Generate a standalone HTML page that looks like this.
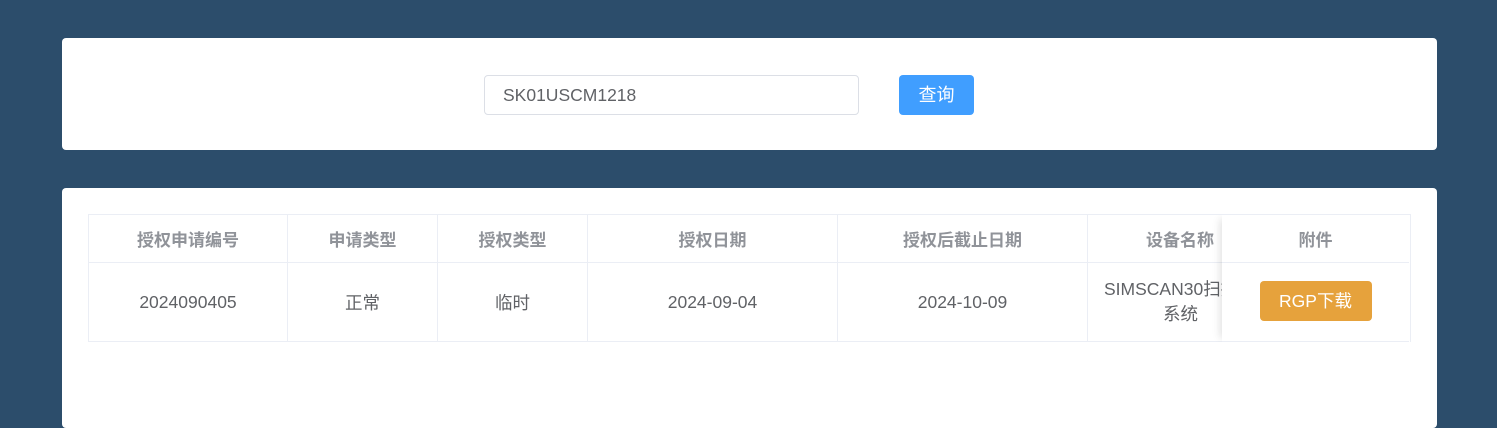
<!DOCTYPE html>
<html><head><meta charset="utf-8"><style>
body{margin:0;width:1497px;height:419px;background:#2c4d6b;font-family:"Liberation Sans","Noto Sans CJK SC",sans-serif;position:relative;overflow:hidden}
.card{position:absolute;left:62px;width:1375px;background:#fff;border-radius:4px}
.a{position:absolute}
.c{position:absolute;display:flex;align-items:center;justify-content:center;box-sizing:border-box;border-right:1px solid #ebeef5;border-bottom:1px solid #ebeef5;font-size:17.5px;color:#606266}
.h{font-weight:bold;color:#909399;font-size:17px}
</style></head><body>
<div class="card" style="top:38px;height:112px"></div>
<div class="a" style="left:484px;top:75px;width:375px;height:40px;box-sizing:border-box;border:1px solid #dcdfe6;border-radius:4px;font-size:17.5px;color:#606266;line-height:38px;padding-left:18px">SK01USCM1218</div>
<div class="a" style="left:899px;top:75px;width:75px;height:40px;background:#409eff;border-radius:4px;color:#fff;font-size:18px;line-height:40px;text-align:center">查询</div>
<div class="card" style="top:188px;height:240px"></div>
<div class="a" style="left:88px;top:214px;width:1323px;height:128px;border-top:1px solid #ebeef5;border-left:1px solid #ebeef5;box-sizing:border-box;overflow:hidden">
<div class="c h" style="left:0;top:0;width:199px;height:48px">授权申请编号</div>
<div class="c h" style="left:199px;top:0;width:150px;height:48px">申请类型</div>
<div class="c h" style="left:349px;top:0;width:150px;height:48px">授权类型</div>
<div class="c h" style="left:499px;top:0;width:250px;height:48px">授权日期</div>
<div class="c h" style="left:749px;top:0;width:250px;height:48px">授权后截止日期</div>
<div class="c h" style="left:999px;top:0;width:200px;height:48px;justify-content:flex-start;padding-left:58px">设备名称</div>
<div class="c" style="left:0;top:48px;width:199px;height:79px">2024090405</div>
<div class="c" style="left:199px;top:48px;width:150px;height:79px">正常</div>
<div class="c" style="left:349px;top:48px;width:150px;height:79px">临时</div>
<div class="c" style="left:499px;top:48px;width:250px;height:79px">2024-09-04</div>
<div class="c" style="left:749px;top:48px;width:250px;height:79px">2024-10-09</div>
<div class="c" style="left:999px;top:48px;width:200px;height:79px;flex-direction:column;line-height:25px;justify-content:center;align-items:flex-start;padding-left:16px"><span>SIMSCAN30扫描</span><span style="padding-left:59px">系统</span></div>
<div class="a" style="left:1133px;top:0;width:188px;height:127px;background:#fff;box-shadow:-6px 0 8px -4px rgba(0,0,0,.12);border-right:1px solid #ebeef5">
<div class="c h" style="left:0;top:0;width:187px;height:48px;border-right:none">附件</div>
<div class="c" style="left:0;top:48px;width:187px;height:79px;border-right:none"><div style="width:112px;height:40px;background:#e6a23c;border-radius:4px;color:#fff;font-size:17.5px;line-height:40px;text-align:center;margin-top:-2px">RGP下载</div></div>
</div>
</div>
</body></html>
